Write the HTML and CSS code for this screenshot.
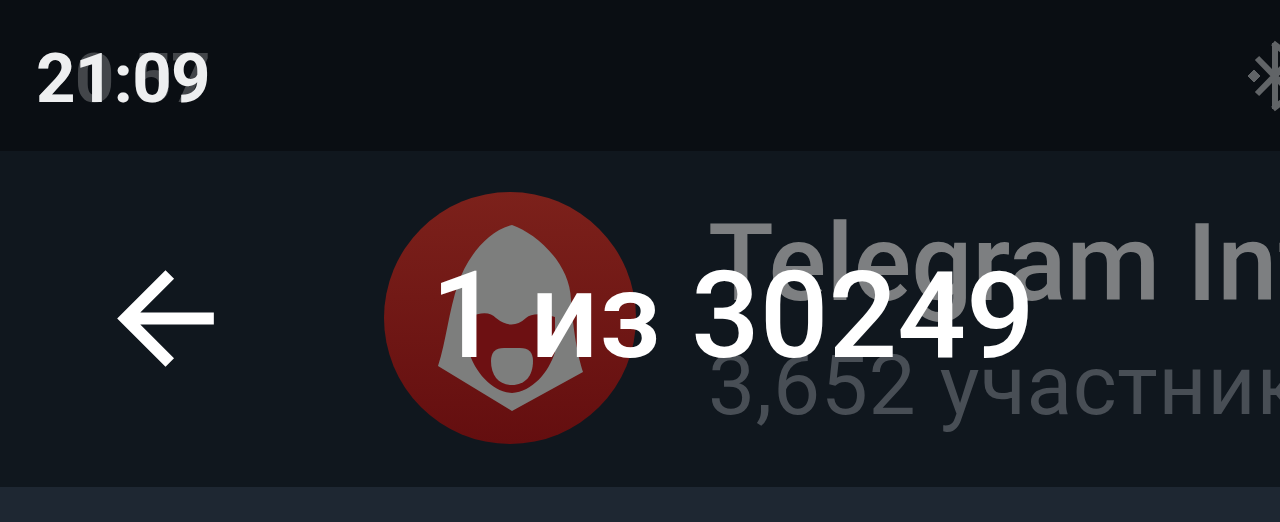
FILE: index.html
```
<!DOCTYPE html>
<html lang="ru">
<head>
    <meta charset="UTF-8">
    <meta name="viewport" content="width=device-width, initial-scale=1.0">
    <title>1 из 30249</title>
    <link rel="stylesheet" href="styles.css">
</head>
<body>
    <div class="screen">
        <!-- Status bar -->
        <div class="status-bar">
            <div class="clock">
                <span class="clock-back">20:57</span>
                <span class="clock-front">21:09</span>
            </div>
            <svg class="bluetooth" viewBox="0 0 34 76">
                <path class="bt-line" d="M9 19L44 55M9 55L44 19M27 4V70M25 4L44 19M25 70L44 55"/>
                <path class="bt-dot" d="M6 31L12 37L6 43L0 37Z"/>
            </svg>
        </div>

        <div class="app-bar">
            <!-- Chat header -->
            <div class="chat-header">
                <svg class="avatar" viewBox="0 0 252 252">
                    <defs>
                        <linearGradient id="avatarFill" x1="0" y1="0" x2="0" y2="1">
                            <stop offset="0" stop-color="#7c211b"/>
                            <stop offset="1" stop-color="#640e0f"/>
                        </linearGradient>
                    </defs>
                    <circle cx="126" cy="126" r="126" fill="url(#avatarFill)"/>
                    <path class="hood" d="M128 33C151 41 186 70 187 108C189 138 194 165 199 180L128 219L54 174C62 150 65 118 74 92C82 67 103 39 128 33Z"/>
                    <path class="mask" d="M85 125Q104 117 112 126Q128 139 142 126Q150 119 171 125V160C165 180 148 200 128 201C108 200 91 180 85 160Z"/>
                    <path class="hood" d="M120 156H136Q149 156 149 169C149 184 141 193 128 193C115 193 107 184 107 169Q107 156 120 156Z"/>
                </svg>
                <div class="chat-info">
                    <div class="chat-name">Telegram Info</div>
                    <div class="chat-members">3,652 участника</div>
                </div>
            </div>

            <!-- Viewer header -->
            <div class="viewer-header">
                <svg class="back-icon" viewBox="0 0 24 24">
                    <path d="M20 11H7.83l5.59-5.59L12 4l-8 8 8 8 1.41-1.41L7.83 13H20v-2z"/>
                </svg>
                <div class="viewer-title">1 из 30249</div>
            </div>
        </div>

        <div class="content"></div>
    </div>
</body>
</html>
```
FILE: styles.css
```
* {
    margin: 0;
    padding: 0;
    box-sizing: border-box;
}

body {
    font-family: Roboto, "Noto Sans", sans-serif;
    background: #0a0e13;
    overflow: hidden;
}

.screen {
    display: flex;
    flex-direction: column;
    width: 1280px;
    height: 522px;
    overflow: hidden;
}

.status-bar {
    display: flex;
    justify-content: space-between;
    height: 151px;
    padding-left: 36px;
    background: #0a0e13;
}

.clock {
    display: grid;
    font-size: 69px;
    font-weight: 700;
    line-height: 157px;
    letter-spacing: -0.8px;
    font-kerning: none;
}

.clock-back,
.clock-front {
    grid-area: 1 / 1;
}

.clock-back {
    color: #43464a;
}

.clock-front {
    color: #eeeff0;
}

.bluetooth {
    width: 34px;
    height: 76px;
    margin-top: 39px;
    margin-right: -2px;
}

.bt-line {
    fill: none;
    stroke: #616467;
    stroke-width: 6;
}

.bt-dot {
    fill: #616467;
    stroke: #616467;
    stroke-linejoin: round;
}

/* both headers share one grid cell, the viewer header lies on top */
.app-bar {
    display: grid;
    height: 336px;
    background: #10171e;
}

.chat-header,
.viewer-header {
    grid-area: 1 / 1;
    display: flex;
    min-width: 0;
    white-space: nowrap;
}

.chat-header {
    padding-left: 384px;
    overflow: hidden;
}

.avatar {
    flex: none;
    width: 252px;
    height: 252px;
    margin-top: 41px;
}

.hood {
    fill: #7d7e7d;
}

.mask {
    fill: #6d1012;
}

.chat-info {
    padding: 51px 0 0 72px;
}

.chat-name {
    font-size: 108px;
    font-weight: 500;
    line-height: 122px;
    letter-spacing: -0.2px;
    color: #7d7f81;
}

.chat-members {
    font-size: 84px;
    line-height: 124px;
    letter-spacing: 0.6px;
    word-spacing: 2px;
    color: #484e55;
}

.viewer-header {
    padding-left: 93px;
}

.back-icon {
    flex: none;
    width: 145px;
    height: 145px;
    margin-top: 95px;
    fill: #fff;
}

.viewer-title {
    padding-left: 193px;
    font-size: 121px;
    font-weight: 500;
    line-height: 330px;
    color: #fff;
}

.content {
    flex: 1;
    background: #1e2732;
}
```
